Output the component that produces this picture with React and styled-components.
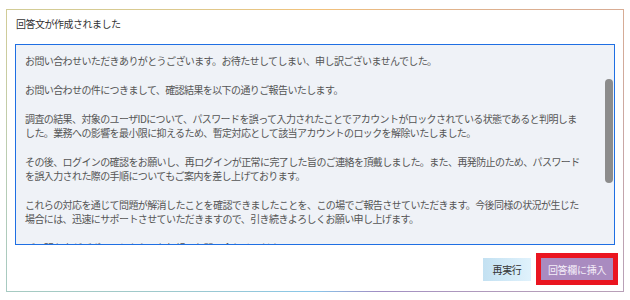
import React from 'react';
import styled, { createGlobalStyle } from 'styled-components';

const GlobalStyle = createGlobalStyle`
    body {
        margin: 0;
        background: #ffffff;
        font-family: 'Noto Sans CJK JP', 'Noto Sans', sans-serif;
    }
`;

const Page = styled.div`
    padding: 9px 6px 0 6px;
`;

const ResultCard = styled.section`
    box-sizing: border-box;
    width: 618px;
    height: 283px;
    padding: 7px 8px 9px 8px;
    display: flex;
    flex-direction: column;
    border: 1px solid transparent;
    border-image: conic-gradient(
        #f3c27a 0deg,
        #d8ac94 65deg,
        #b8a0b8 115deg,
        #a08ec4 156deg,
        #88c6ea 180deg,
        #a6cac2 245deg,
        #bccdb0 270deg,
        #d2cc96 295deg,
        #f3c27a 360deg
    ) 1;
    background: #fff;
`;

const CardTitle = styled.h2`
    margin: 0 0 13px 0;
    padding-left: 1px;
    font-size: 10px;
    letter-spacing: -0.5px;
    line-height: 14px;
    font-weight: 400;
    color: #333;
`;

const AnswerBox = styled.div`
    position: relative;
    box-sizing: border-box;
    height: 201px;
    padding: 9px 10px 0 9px;
    border: 1px solid #1f6fe3;
    background: #eff2f7;
    overflow: hidden;
    font-size: 10px;
    letter-spacing: -0.6px;
    line-height: 14.4px;
    color: #555;

    p {
        margin: 0 0 14.4px 0;
    }

    span {
        display: block;
        white-space: nowrap;
    }
`;

const ScrollThumb = styled.div`
    position: absolute;
    right: 1px;
    top: 34px;
    width: 8px;
    height: 104px;
    border-radius: 4px;
    background: #8c8c8c;
`;

const ActionRow = styled.div`
    margin-top: 13px;
    display: flex;
    justify-content: flex-end;
    gap: 10px;
    padding-right: 2px;
`;

const ActionButton = styled.button`
    box-sizing: border-box;
    width: ${(p) => (p.$primary ? '72px' : '48px')};
    height: ${(p) => (p.$primary ? '22px' : '23px')};
    padding: 0;
    border: none;
    font-family: 'Noto Sans CJK JP', sans-serif;
    font-size: 10px;
    letter-spacing: -0.3px;
    color: ${(p) => (p.$primary ? '#f4eef8' : '#333')};
    background: ${(p) => (p.$primary ? '#a98bc0' : 'linear-gradient(90deg, #c3e1f2, #e0f2fc)')};
    outline: ${(p) => (p.$highlight ? '5px solid #ea1520' : 'none')};
`;

const paragraphs = [
    ['お問い合わせいただきありがとうございます。お待たせしてしまい、申し訳ございませんでした。'],
    ['お問い合わせの件につきまして、確認結果を以下の通りご報告いたします。'],
    [
        '調査の結果、対象のユーザIDについて、パスワードを誤って入力されたことでアカウントがロックされている状態であると判明しま',
        'した。業務への影響を最小限に抑えるため、暫定対応として該当アカウントのロックを解除いたしました。',
    ],
    [
        'その後、ログインの確認をお願いし、再ログインが正常に完了した旨のご連絡を頂戴しました。また、再発防止のため、パスワード',
        'を誤入力された際の手順についてもご案内を差し上げております。',
    ],
    [
        'これらの対応を通じて問題が解消したことを確認できましたことを、この場でご報告させていただきます。今後同様の状況が生じた',
        '場合には、迅速にサポートさせていただきますので、引き続きよろしくお願い申し上げます。',
    ],
    ['ご不明な点がございましたら、お気軽にお問い合わせください。'],
];

function App() {
    return (
        <Page>
            <GlobalStyle />
            <ResultCard>
                <CardTitle>回答文が作成されました</CardTitle>

                <AnswerBox>
                    {paragraphs.map((lines, i) => (
                        <p key={i}>
                            {lines.map((line, j) => (
                                <span key={j}>{line}</span>
                            ))}
                        </p>
                    ))}
                    <ScrollThumb />
                </AnswerBox>

                <ActionRow>
                    <ActionButton>再実行</ActionButton>
                    <ActionButton $primary $highlight>回答欄に挿入</ActionButton>
                </ActionRow>
            </ResultCard>
        </Page>
    );
}

export default App;
